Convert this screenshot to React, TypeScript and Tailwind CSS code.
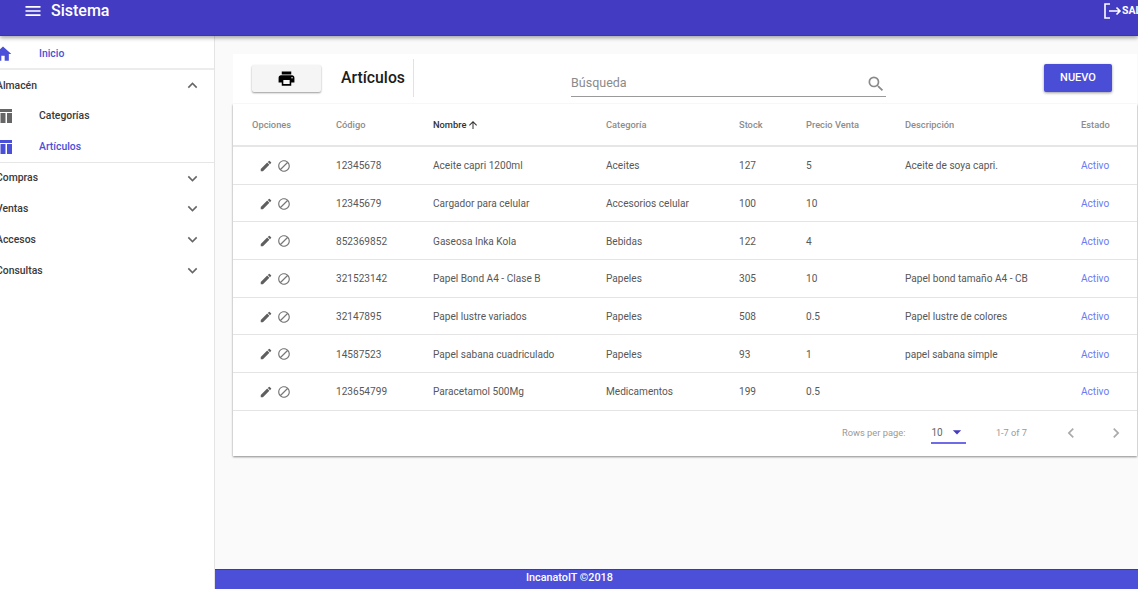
import React from "react";
import {
  MdMenu, MdHome, MdExpandLess, MdExpandMore, MdPrint, MdSearch, MdEdit, MdBlock,
  MdArrowUpward, MdArrowDropDown, MdChevronLeft, MdChevronRight,
} from "react-icons/md";

const rows = [
  ["12345678", "Aceite capri 1200ml", "Aceites", "127", "5", "Aceite de soya capri."],
  ["12345679", "Cargador para celular", "Accesorios celular", "100", "10", ""],
  ["852369852", "Gaseosa Inka Kola", "Bebidas", "122", "4", ""],
  ["321523142", "Papel Bond A4 - Clase B", "Papeles", "305", "10", "Papel bond tamaño A4 - CB"],
  ["32147895", "Papel lustre variados", "Papeles", "508", "0.5", "Papel lustre de colores"],
  ["14587523", "Papel sabana cuadriculado", "Papeles", "93", "1", "papel sabana simple"],
  ["123654799", "Paracetamol 500Mg", "Medicamentos", "199", "0.5", ""],
];

const cols = "grid grid-cols-[84px_97px_173px_133px_67px_99px_176px_1fr] pl-[19px] items-center";

function TableIcon({ className }: { className: string }) {
  return (
    <svg width="20" height="20" viewBox="0 0 20 20" fill="currentColor" className={className}>
      <path d="M1 3h18v3H1zM1 7h5v10H1zM7.500 7h5v10h-5zM14 7h5v10h-5z" />
    </svg>
  );
}

function Group({ label, open }: { label: string; open?: boolean }) {
  const Icon = open ? MdExpandLess : MdExpandMore;
  return (
    <div className="flex h-[30.800px] items-center justify-between pr-[12px] text-[10.400px] font-medium text-[#3a3a3a]">
      <span className="-ml-[4px]">{label}</span>
      <Icon size={19} className="text-[#666]" />
    </div>
  );
}

function Sub({ label, active }: { label: string; active?: boolean }) {
  return (
    <div className={`flex h-[31px] items-center text-[10.400px] font-medium ${active ? "text-[#4a50d8]" : "text-[#3a3a3a]"}`}>
      <TableIcon className={`-ml-[7px] ${active ? "text-[#4a50d8]" : "text-[#666]"}`} />
      <span className="ml-[26px]">{label}</span>
    </div>
  );
}

export default function App() {
  return (
    <div className="flex h-[589px] w-[1138px] flex-col overflow-hidden bg-[#fafafa] font-['Roboto',sans-serif]">
      <header className="relative z-10 flex h-[36px] shrink-0 items-start justify-between border-b border-[#3a34b0] bg-[#433bc2] shadow-[0_2px_4px_rgba(0,0,0,0.35)]">
        <div className="flex items-center pl-[23px] text-white">
          <MdMenu size={20} className="mt-px" />
          <span className="ml-[8px] text-[16px] leading-[20px] font-medium">Sistema</span>
        </div>
        <div className="flex w-[34px] items-center overflow-hidden pt-[3px] text-white">
          <svg width="18" height="16" viewBox="0 0 18 16" fill="none" stroke="currentColor" strokeWidth="1.6" className="shrink-0">
            <path d="M6 1H1v14h5M5 8h11M12.500 4.500 16 8l-3.500 3.500" />
          </svg>
          <span className="text-[10.500px] font-bold">SALIR</span>
        </div>
      </header>

      <div className="flex min-h-0 flex-1">
        <aside className="flex w-[215px] shrink-0 flex-col overflow-hidden border-r border-[#e4e4e4] bg-white pt-[3px]">
          <div className="flex h-[31px] items-center border-b-2 border-[#ececec] text-[10.400px] font-medium text-[#4a50d8]">
            <MdHome size={20} className="-ml-[7px]" />
            <span className="ml-[26px]">Inicio</span>
          </div>
          <Group label="Almacén" open />
          <Sub label="Categorías" />
          <Sub label="Artículos" active />
          <div className="-mt-px h-px bg-[#e6e6e6]" />
          <Group label="Compras" />
          <Group label="Ventas" />
          <Group label="Accesos" />
          <Group label="Consultas" />
        </aside>

        <div className="flex min-w-0 flex-1 flex-col">
          <main className="flex-1 pl-[18px] pr-px pt-[18px]">
            <div className="flex h-[50px] items-start bg-white pl-[18px] pr-[25px]">
              <button className="mt-[11px] flex h-[27px] w-[69px] translate-x-px items-center justify-center rounded-[2px] bg-[#f5f5f5] text-black shadow-[0_1px_2px_rgba(0,0,0,0.4)]">
                <MdPrint size={19} />
              </button>
              <div className="ml-[21px] mt-[5px] flex h-[38px] w-[73px] items-center border-r border-[#e2e2e2] text-[15.800px] font-medium text-[#1c1c1c]">
                Artículos
              </div>
              <div className="ml-[157px] mt-[15px] flex h-[28px] w-[315px] items-center justify-between border-b border-[#9a9a9a] pt-[2px] text-[12.500px] text-[#8a8a8a]">
                <span>Búsqueda</span>
                <MdSearch size={20} />
              </div>
              <button className="ml-auto mt-[10px] flex h-[28px] w-[68px] items-center justify-center rounded-[2px] bg-[#4a4dd6] text-[11px] font-medium text-white shadow-[0_1px_3px_rgba(0,0,0,0.4)]">
                NUEVO
              </button>
            </div>

            <div className="bg-white shadow-[0_1px_2px_rgba(0,0,0,0.45)]">
              <div className={`${cols} h-[43px] border-b-2 border-[#e6e6e6] text-[9.300px] font-medium text-[#8c8c8c]`}>
                <span>Opciones</span>
                <span>Código</span>
                <span className="flex items-center text-[#333]">Nombre<MdArrowUpward size={12} className="ml-px" /></span>
                <span>Categoría</span>
                <span>Stock</span>
                <span>Precio Venta</span>
                <span>Descripción</span>
                <span>Estado</span>
              </div>
              {rows.map((r) => (
                <div key={r[0]} className={`${cols} h-[37.700px] border-b border-[#e4e4e4] pt-[1px] text-[10.100px] text-[#585858]`}>
                  <span className="flex items-center pl-[7px] text-[#5f5f5f]">
                    <MdEdit size={14} />
                    <MdBlock size={14} className="ml-[4px] text-[#777]" />
                  </span>
                  <span>{r[0]}</span>
                  <span>{r[1]}</span>
                  <span>{r[2]}</span>
                  <span>{r[3]}</span>
                  <span>{r[4]}</span>
                  <span>{r[5]}</span>
                  <span className="text-[#6a7bf2]">Activo</span>
                </div>
              ))}
              <div className="flex h-[45px] items-center text-[9.300px] text-[#999]">
                <span className="ml-[609px]">Rows per page:</span>
                <div className="relative ml-[26px] flex h-[22px] w-[35px] items-center justify-between border-b-2 border-[#6f6be6] text-[10px] text-[#666]">
                  <span>10</span>
                  <MdArrowDropDown size={20} className="-mr-[1px] text-[#433bc2]" />
                </div>
                <span className="ml-[29.500px] text-[9.200px]">1-7 of 7</span>
                <MdChevronLeft size={20} className="ml-[34.500px] text-[#aaa]" />
                <MdChevronRight size={20} className="ml-[25px] text-[#aaa]" />
              </div>
            </div>
          </main>
          <footer className="h-[20px] shrink-0 border-t border-[#3a34c4] bg-[#4c50d9] pl-[311px] text-[10.800px] leading-[16px] font-medium text-white">
            IncanatoIT ©2018
          </footer>
        </div>
      </div>
    </div>
  );
}
